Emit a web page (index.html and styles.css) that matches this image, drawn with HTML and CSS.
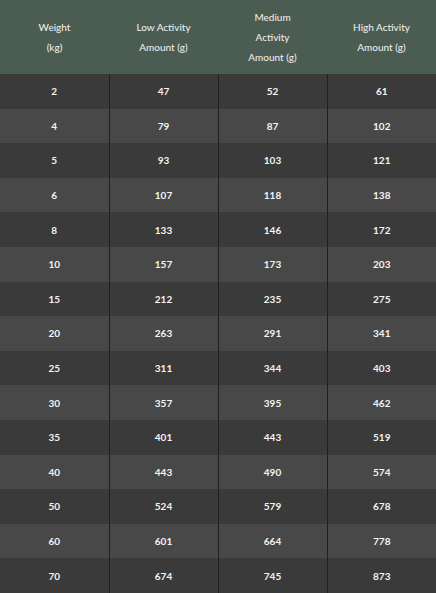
FILE: index.html
```html
<!DOCTYPE html>
<html>
<head>
<meta charset="utf-8">
<link rel="stylesheet" href="styles.css">
</head>
<body>
<table class="feed">
  <thead>
    <tr>
      <th>Weight<br>(kg)</th>
      <th>Low Activity<br>Amount (g)</th>
      <th>Medium<br>Activity<br>Amount (g)</th>
      <th>High Activity<br>Amount (g)</th>
    </tr>
  </thead>
  <tbody>
    <tr><td>2</td><td>47</td><td>52</td><td>61</td></tr>
    <tr><td>4</td><td>79</td><td>87</td><td>102</td></tr>
    <tr><td>5</td><td>93</td><td>103</td><td>121</td></tr>
    <tr><td>6</td><td>107</td><td>118</td><td>138</td></tr>
    <tr><td>8</td><td>133</td><td>146</td><td>172</td></tr>
    <tr><td>10</td><td>157</td><td>173</td><td>203</td></tr>
    <tr><td>15</td><td>212</td><td>235</td><td>275</td></tr>
    <tr><td>20</td><td>263</td><td>291</td><td>341</td></tr>
    <tr><td>25</td><td>311</td><td>344</td><td>403</td></tr>
    <tr><td>30</td><td>357</td><td>395</td><td>462</td></tr>
    <tr><td>35</td><td>401</td><td>443</td><td>519</td></tr>
    <tr><td>40</td><td>443</td><td>490</td><td>574</td></tr>
    <tr><td>50</td><td>524</td><td>579</td><td>678</td></tr>
    <tr><td>60</td><td>601</td><td>664</td><td>778</td></tr>
    <tr><td>70</td><td>674</td><td>745</td><td>873</td></tr>
  </tbody>
</table>
</body>
</html>
```
FILE: styles.css
```css
html, body {
  margin: 0;
  padding: 0;
  background: #3a3a3a;
}
.feed {
  width: 436px;
  border-collapse: collapse;
  table-layout: fixed;
  font-family: Lato, "Open Sans", sans-serif;
  font-size: 10px;
  color: #f4f4f4;
}
.feed th {
  background: #4b5d52;
  font-weight: 400;
  height: 74px;
  line-height: 20px;
  padding: 0;
  text-align: center;
  vertical-align: middle;
}
.feed td {
  height: 34.6px;
  padding: 0;
  text-align: center;
  vertical-align: middle;
  font-weight: 700;
  border-left: 1px solid #1f1f1f;
}
.feed td:first-child {
  border-left: none;
}
.feed tbody tr:nth-child(odd) {
  background: #3a3a3a;
}
.feed tbody tr:nth-child(even) {
  background: #484848;
}
```
